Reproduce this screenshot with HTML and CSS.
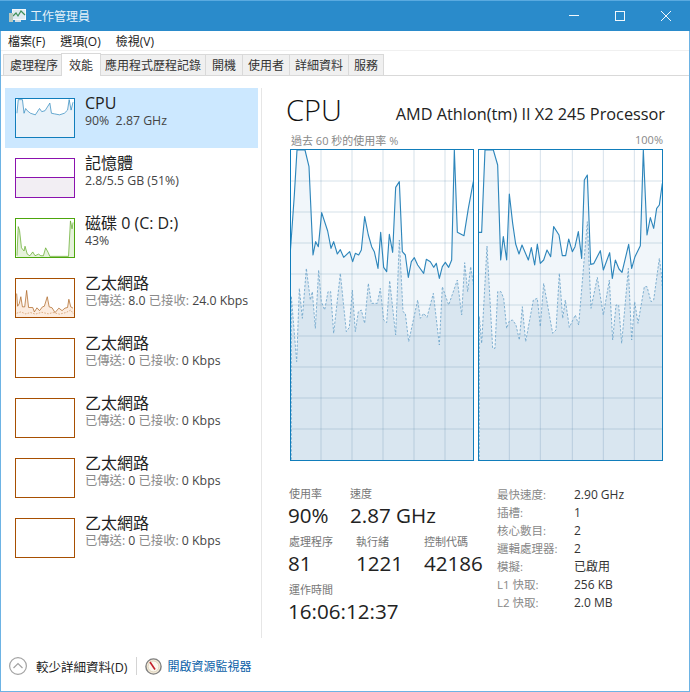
FILE: index.html
```html
<!DOCTYPE html>
<html lang="zh-Hant">
<head>
	<meta charset="UTF-8">
	<title>工作管理員</title>
	<link rel="stylesheet" href="styles.css">
</head>
<body>
<div class="window">
	<div class="titlebar">
		<svg class="appicon" width="17" height="16" viewBox="0 0 17 16">
			<rect x="3.5" y="1.5" width="13" height="10" fill="#dfeaf2" stroke="#f4f8fb"/>
			<polyline points="4,8 7,5 9,8 12,3 16,7" fill="none" stroke="#3f8f5a" stroke-width="1.2"/>
			<rect x="0" y="5" width="4" height="9" fill="#b9c9c0"/>
			<rect x="6" y="12" width="6" height="2" fill="#cfdde6"/>
		</svg>
		<span class="apptitle">工作管理員</span>
		<div class="controls">
			<svg width="12" height="12" viewBox="0 0 12 12"><line x1="1" y1="5.5" x2="11" y2="5.5"/></svg>
			<svg width="12" height="12" viewBox="0 0 12 12"><rect x="1.5" y="1.5" width="9" height="9"/></svg>
			<svg width="12" height="12" viewBox="0 0 12 12"><path d="M1 1 L11 11 M11 1 L1 11"/></svg>
		</div>
	</div>
	<ul class="menu">
		<li>檔案(F)</li>
		<li>選項(O)</li>
		<li>檢視(V)</li>
	</ul>
	<ul class="tabs">
		<li class="tab-first">處理程序</li>
		<li class="active">效能</li>
		<li class="tab-wide">應用程式歷程記錄</li>
		<li class="tab-boot">開機</li>
		<li>使用者</li>
		<li>詳細資料</li>
		<li>服務</li>
	</ul>
	<div class="panes">
		<div class="sidebar">
			<div class="row selected">
				<svg class="thumb cpu" viewBox="45 295 180 120" preserveAspectRatio="none">
					<polygon class="fill" points="48,340 52,297 65,297 70,340 75,325 80,332 90,340 105,345 118,325 125,335 135,332 150,308 155,340 165,342 180,345 195,340 205,330 210,297 216,330 222,305 240,450 40,450"/>
					<polyline class="line" points="48,340 52,297 65,297 70,340 75,325 80,332 90,340 105,345 118,325 125,335 135,332 150,308 155,340 165,342 180,345 195,340 205,330 210,297 216,330 222,305"/>
				</svg>
				<div class="rowtext">
					<div class="rowname">CPU</div>
					<div class="rowsub">90%&nbsp; 2.87 GHz</div>
				</div>
			</div>
			<div class="row">
				<div class="thumb mem"><div class="memused"></div></div>
				<div class="rowtext">
					<div class="rowname">記憶體</div>
					<div class="rowsub">2.8/5.5 GB (51%)</div>
				</div>
			</div>
			<div class="row">
				<svg class="thumb disk" viewBox="45 204 180 120" preserveAspectRatio="none">
					<polygon class="fill" points="48,320 52,228 56,240 62,295 70,305 73,290 80,315 88,320 97,308 104,320 115,315 122,320 130,320 137,295 145,310 150,322 208,322 214,210 219,235 222,215 240,350 40,350"/>
					<polyline class="line" points="48,320 52,228 56,240 62,295 70,305 73,290 80,315 88,320 97,308 104,320 115,315 122,320 130,320 137,295 145,310 150,322 208,322 214,210 219,235 222,215"/>
				</svg>
				<div class="rowtext">
					<div class="rowname">磁碟 0 (C: D:)</div>
					<div class="rowsub">43%</div>
				</div>
			</div>
			<div class="row">
				<svg class="thumb net" viewBox="45 384 180 120" preserveAspectRatio="none">
					<polygon class="fill" points="47,430 50,470 55,462 60,440 65,472 72,472 78,420 84,474 97,474 102,488 110,475 118,484 127,472 133,470 142,440 148,472 157,475 166,490 178,476 188,484 197,476 205,474 209,448 215,472 222,476 240,520 40,520"/>
					<polyline class="line" points="47,430 50,470 55,462 60,440 65,472 72,472 78,420 84,474 97,474 102,488 110,475 118,484 127,472 133,470 142,440 148,472 157,475 166,490 178,476 188,484 197,476 205,474 209,448 215,472 222,476"/>
					<polyline class="dash" points="47,492 60,488 75,494 90,490 105,495 125,489 145,494 160,490 180,495 200,490 215,482 223,494"/>
				</svg>
				<div class="rowtext">
					<div class="rowname">乙太網路</div>
					<div class="rowsub"><span class="dim">已傳送:</span> 8.0 <span class="dim">已接收:</span> 24.0 Kbps</div>
				</div>
			</div>
			<div class="row">
				<div class="thumb net"></div>
				<div class="rowtext">
					<div class="rowname">乙太網路</div>
					<div class="rowsub"><span class="dim">已傳送:</span> 0 <span class="dim">已接收:</span> 0 Kbps</div>
				</div>
			</div>
			<div class="row">
				<div class="thumb net"></div>
				<div class="rowtext">
					<div class="rowname">乙太網路</div>
					<div class="rowsub"><span class="dim">已傳送:</span> 0 <span class="dim">已接收:</span> 0 Kbps</div>
				</div>
			</div>
			<div class="row">
				<div class="thumb net"></div>
				<div class="rowtext">
					<div class="rowname">乙太網路</div>
					<div class="rowsub"><span class="dim">已傳送:</span> 0 <span class="dim">已接收:</span> 0 Kbps</div>
				</div>
			</div>
			<div class="row">
				<div class="thumb net"></div>
				<div class="rowtext">
					<div class="rowname">乙太網路</div>
					<div class="rowsub"><span class="dim">已傳送:</span> 0 <span class="dim">已接收:</span> 0 Kbps</div>
				</div>
			</div>
		</div>
		<div class="detail">
			<div class="head">
				<div class="headtitle">CPU</div>
				<div class="headmodel">AMD Athlon(tm) II X2 245 Processor</div>
			</div>
			<div class="chartlabels">
				<span>過去 60 秒的使用率 %</span>
				<span>100%</span>
			</div>
			<div class="charts">
				<div class="chart">
					<svg class="plot" viewBox="18 15 546 930" preserveAspectRatio="none">
						<polygon class="area" points="16,320 28,150 36,15 60,15 72,65 84,330 92,290 100,305 110,203 128,258 138,310 146,290 157,327 166,314 176,337 194,320 203,350 211,325 221,330 229,315 239,215 250,270 260,305 268,320 279,370 287,262 296,367 305,380 313,268 323,322 332,127 343,110 352,320 361,330 370,397 379,350 388,338 398,360 416,385 424,343 436,350 446,367 454,355 463,400 472,365 481,352 491,367 500,345 508,15 517,262 537,272 550,190 565,110 600,1000 16,1000"/>
						<polygon class="area-kernel" points="19,455 35,650 43,430 52,520 64,370 76,465 82,440 91,550 101,375 109,470 119,495 129,440 137,440 146,565 166,385 184,560 193,547 202,435 211,560 220,500 229,495 239,535 250,415 259,475 277,475 286,430 296,525 305,533 314,407 332,570 343,285 354,500 361,505 371,590 398,465 406,520 416,505 426,517 445,445 463,600 472,425 491,480 517,405 530,510 539,353 548,440 557,365 565,415 600,1000 19,1000"/>
						<path class="grid" d="M108 0V960M201 0V960M294 0V960M387 0V960M480 0V960M0 108H600M0 201H600M0 294H600M0 387H600M0 480H600M0 573H600M0 666H600M0 759H600M0 852H600"/>
						<polygon class="kernel" points="19,455 35,650 43,430 52,520 64,370 76,465 82,440 91,550 101,375 109,470 119,495 129,440 137,440 146,565 166,385 184,560 193,547 202,435 211,560 220,500 229,495 239,535 250,415 259,475 277,475 286,430 296,525 305,533 314,407 332,570 343,285 354,500 361,505 371,590 398,465 406,520 416,505 426,517 445,445 463,600 472,425 491,480 517,405 530,510 539,353 548,440 557,365 565,415 600,1000 19,1000"/>
						<polyline class="usage" points="16,320 28,150 36,15 60,15 72,65 84,330 92,290 100,305 110,203 128,258 138,310 146,290 157,327 166,314 176,337 194,320 203,350 211,325 221,330 229,315 239,215 250,270 260,305 268,320 279,370 287,262 296,367 305,380 313,268 323,322 332,127 343,110 352,320 361,330 370,397 379,350 388,338 398,360 416,385 424,343 436,350 446,367 454,355 463,400 472,365 481,352 491,367 500,345 508,15 517,262 537,272 550,190 565,110"/>
					</svg>
				</div>
				<div class="chart chart-right">
					<svg class="plot" viewBox="12 15 549 930" preserveAspectRatio="none">
						<polygon class="area" points="10,262 20,262 30,15 55,15 68,60 77,345 85,275 95,345 103,147 113,235 122,297 132,327 141,300 160,345 169,308 179,360 187,297 196,355 206,345 216,315 227,335 236,245 252,270 262,332 272,332 281,282 292,320 300,305 310,260 320,340 328,105 337,90 347,358 356,356 376,317 385,375 404,323 412,400 421,345 432,372 441,382 461,298 470,370 480,335 496,302 505,15 516,270 526,218 536,250 545,190 553,180 562,115 600,1000 10,1000"/>
						<polygon class="area-kernel" points="13,515 20,595 36,303 53,610 60,610 68,440 78,440 86,460 95,550 103,528 113,525 123,540 133,585 142,485 152,590 175,465 187,460 196,545 206,415 233,565 243,555 253,385 263,520 271,465 283,547 301,510 311,540 337,230 348,490 367,397 385,510 403,405 413,585 423,480 431,480 440,595 460,370 470,585 479,470 489,535 508,425 516,425 528,470 536,465 553,340 559,385 600,1000 13,1000"/>
						<path class="grid" d="M103 0V960M196 0V960M292 0V960M385 0V960M478 0V960M0 108H600M0 201H600M0 294H600M0 387H600M0 480H600M0 573H600M0 666H600M0 759H600M0 852H600"/>
						<polygon class="kernel" points="13,515 20,595 36,303 53,610 60,610 68,440 78,440 86,460 95,550 103,528 113,525 123,540 133,585 142,485 152,590 175,465 187,460 196,545 206,415 233,565 243,555 253,385 263,520 271,465 283,547 301,510 311,540 337,230 348,490 367,397 385,510 403,405 413,585 423,480 431,480 440,595 460,370 470,585 479,470 489,535 508,425 516,425 528,470 536,465 553,340 559,385 600,1000 13,1000"/>
						<polyline class="usage" points="10,262 20,262 30,15 55,15 68,60 77,345 85,275 95,345 103,147 113,235 122,297 132,327 141,300 160,345 169,308 179,360 187,297 196,355 206,345 216,315 227,335 236,245 252,270 262,332 272,332 281,282 292,320 300,305 310,260 320,340 328,105 337,90 347,358 356,356 376,317 385,375 404,323 412,400 421,345 432,372 441,382 461,298 470,370 480,335 496,302 505,15 516,270 526,218 536,250 545,190 553,180 562,115"/>
					</svg>
				</div>
			</div>
			<div class="stats">
				<div class="statsleft">
					<div class="statrow statrow-a">
						<div><div class="statlabel">使用率</div><div class="statvalue">90%</div></div>
						<div><div class="statlabel">速度</div><div class="statvalue">2.87 GHz</div></div>
					</div>
					<div class="statrow statrow-b">
						<div><div class="statlabel">處理程序</div><div class="statvalue">81</div></div>
						<div><div class="statlabel">執行緒</div><div class="statvalue">1221</div></div>
						<div><div class="statlabel">控制代碼</div><div class="statvalue">42186</div></div>
					</div>
					<div class="statrow">
						<div><div class="statlabel">運作時間</div><div class="statvalue">16:06:12:37</div></div>
					</div>
				</div>
				<dl class="specs">
					<dt>最快速度:</dt><dd>2.90 GHz</dd>
					<dt>插槽:</dt><dd>1</dd>
					<dt>核心數目:</dt><dd>2</dd>
					<dt>邏輯處理器:</dt><dd>2</dd>
					<dt>模擬:</dt><dd>已啟用</dd>
					<dt>L1 快取:</dt><dd>256 KB</dd>
					<dt>L2 快取:</dt><dd>2.0 MB</dd>
				</dl>
			</div>
		</div>
	</div>
	<div class="footer">
		<svg class="fewer" width="18" height="18" viewBox="0 0 18 18">
			<circle cx="9" cy="9" r="8.4"/>
			<polyline points="4.5,11 9,6.5 13.5,11"/>
		</svg>
		<span class="fewertext">較少詳細資料(D)</span>
		<span class="footsep"></span>
		<svg class="resmon" width="17" height="17" viewBox="0 0 17 17">
			<circle cx="8.5" cy="8.5" r="7.6" fill="#f3ead8" stroke="#7f7f7f" stroke-width="1.4"/>
			<circle cx="8.5" cy="8.5" r="5.4" fill="#fbf7ee" stroke="#cfc3a8" stroke-width=".6"/>
			<line x1="5" y1="4" x2="10" y2="11.5" stroke="#c2202a" stroke-width="1.6"/>
		</svg>
		<span class="footlink">開啟資源監視器</span>
	</div>
</div>
</body>
</html>
```

FILE: styles.css
```css
* { box-sizing: border-box; }
html, body, ul, li, dl, dt, dd { margin: 0; padding: 0; list-style: none; }
body {
	width: 690px;
	height: 692px;
	overflow: hidden;
	background: #fff;
	font-family: "Open Sans", "Noto Sans CJK TC", sans-serif;
	font-size: 12px;
	color: #222;
}
.window {
	width: 690px;
	height: 692px;
	display: flex;
	flex-direction: column;
	border-left: 1px solid #6db3e4;
	border-right: 1px solid #6db3e4;
	border-bottom: 1px solid #6db3e4;
}

/* title bar */
.titlebar {
	height: 31px;
	margin: 0 -1px;
	padding: 0 12px 0 9px;
	display: flex;
	align-items: center;
	background: #2a8bcb;
	border-top: 1px solid #5aaae0;
	color: #e6f1f9;
}
.appicon { margin-right: 4px; }
.apptitle { font-size: 12px; }
.controls {
	margin-left: auto;
	display: flex;
	gap: 34px;
	padding-right: 6px;
}
.controls svg { display: block; fill: none; stroke: #f2f8fc; stroke-width: 1; }

/* menu and tabs */
.menu {
	height: 19px;
	display: flex;
	align-items: center;
	gap: 15px;
	padding-left: 7px;
	color: #222;
}
.tabs {
	height: 26px;
	display: flex;
	align-items: flex-end;
	padding-left: 2px;
	border-top: 1px solid #f0f0f0;
	border-bottom: 1px solid #d9d9d9;
}
.tabs li {
	height: 21px;
	padding: 0 5px;
	margin-left: -1px;
	line-height: 21px;
	background: #f0f0f0;
	border: 1px solid #d9d9d9;
	border-bottom: 0;
	color: #333;
}
.tabs .tab-first { margin-left: 0; padding: 0 3px 0 6px; }
.tabs .tab-wide { padding: 0 4px; }
.tabs .tab-boot { padding: 0 6px; }
.tabs .active {
	height: 23px;
	padding: 0 7px;
	margin-bottom: -1px;
	line-height: 23px;
	background: #fff;
	position: relative;
}

/* left list */
.panes {
	height: 550px;
	margin-top: 12px;
	display: flex;
}
.sidebar {
	width: 261px;
	padding-left: 4px;
	padding-right: 3px;
	border-right: 1px solid #e6e6e6;
}
.row {
	height: 60px;
	padding: 10px;
	display: flex;
	gap: 10px;
}
.selected { background: #cce8ff; }
.thumb {
	display: block;
	width: 60px;
	height: 40px;
	flex: none;
	background: #fff;
	border-style: solid;
	border-width: 1px;
}
.thumb .fill { stroke: none; }
.thumb .line { fill: none; stroke-width: 2.2; }
.thumb .dash { fill: none; stroke-width: 2; stroke-dasharray: 5 4; }
.cpu { border-color: #117dbb; }
.cpu .fill { fill: #e9f2f9; }
.cpu .line { stroke: #2b86bd; }
.mem { border-color: #8b12ae; display: flex; align-items: flex-end; }
.memused { width: 100%; height: 20px; background: #f2eef3; border-top: 1px solid #8b12ae; }
.disk { border-color: #4da60c; }
.disk .fill { fill: #e6f2dc; }
.disk .line { stroke: #5da823; }
.net { border-color: #a74f01; }
.net .fill { fill: #fcecdf; }
.net .line { stroke: #a9601c; }
.net .dash { stroke: #c98a52; }
.rowtext { margin-top: -5px; }
.rowname { font-size: 16px; line-height: 20px; color: #222; white-space: nowrap; }
.rowsub { font-size: 12.3px; line-height: 16px; color: #444; white-space: nowrap; }
.dim { color: #8a8a8a; }

/* right panel */
.detail {
	flex: 1;
	padding: 0 24px 0 25px;
}
.head {
	height: 42px;
	display: flex;
	justify-content: space-between;
	align-items: center;
}
.headtitle { font-size: 29px; font-weight: 300; margin-left: -1px; color: #111; }
.headmodel { font-size: 16.3px; color: #222; padding-top: 10px; white-space: nowrap; }
.chartlabels {
	height: 19px;
	margin: 0 2px 0 4px;
	display: flex;
	justify-content: space-between;
	align-items: center;
	font-size: 11px;
	color: #888;
}
.charts {
	display: flex;
	gap: 4px;
	margin-left: 3px;
}
.chart {
	width: 184px;
	height: 312px;
	border: 1px solid #117dbb;
}
.chart-right { width: 185px; }
.plot { display: block; width: 100%; height: 100%; overflow: hidden; }
.area { fill: #f1f6fa; stroke: none; }
.area-kernel { fill: #d9e6f0; stroke: none; }
.grid { fill: none; stroke: rgb(70, 120, 160); stroke-opacity: .22; stroke-width: 3; }
.usage { fill: none; stroke: #2e86bb; stroke-width: 3.4; stroke-linejoin: round; }
.kernel { fill: none; stroke: #6fa6cb; stroke-width: 2.6; stroke-dasharray: 7 5; }

/* numbers under the charts */
.stats {
	display: flex;
	margin-top: 25px;
}
.statsleft { width: 210px; padding-left: 2px; }
.statrow { display: grid; height: 48px; }
.statrow-a { grid-template-columns: 61px auto; }
.statrow-b { grid-template-columns: 67px 68px auto; }
.statlabel { height: 16px; line-height: 16px; font-size: 11px; color: #777; }
.statvalue { height: 26px; line-height: 26px; font-size: 20.6px; margin-left: -1px; color: #222; white-space: nowrap; }
.statrow > div + div .statvalue { margin-left: 0; }
.specs {
	display: grid;
	grid-template-columns: 77px auto;
	grid-auto-rows: 18px;
	line-height: 18px;
	font-size: 11.5px;
}
.specs dt { color: #888; }
.specs dd { color: #333; font-size: 12px; }

/* footer */
.footer {
	flex: 1;
	display: flex;
	align-items: center;
	padding: 3px 0 0 8px;
}
.fewer { fill: none; stroke: #a3a3a3; stroke-width: 1.2; }
.fewertext { margin-left: 9px; font-size: 12.5px; color: #222; }
.footsep { width: 1px; height: 18px; margin: 0 8px 0 9px; background: #d4d4d4; }
.footlink { margin-left: 5px; color: #0b5fa8; }
```
